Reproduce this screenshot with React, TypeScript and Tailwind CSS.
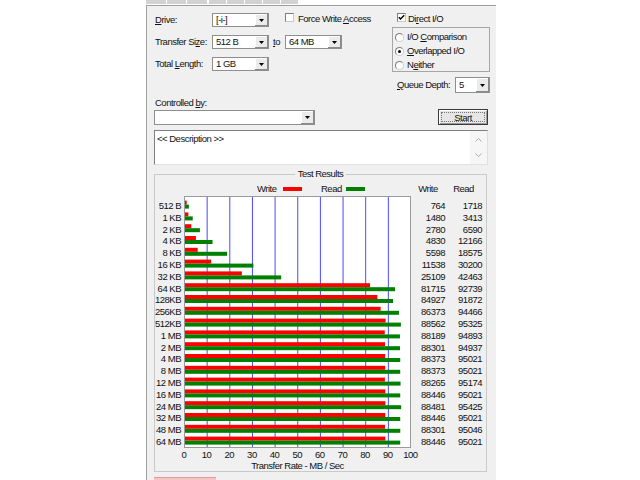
import React from "react";

const sizes = ["512 B", "1 KB", "2 KB", "4 KB", "8 KB", "16 KB", "32 KB", "64 KB", "128KB", "256KB", "512KB", "1 MB", "2 MB", "4 MB", "8 MB", "12 MB", "16 MB", "24 MB", "32 MB", "48 MB", "64 MB"];
const writes = [764, 1480, 2780, 4830, 5598, 11538, 25109, 81715, 84927, 86373, 88562, 88189, 88301, 88373, 88373, 88265, 88446, 88481, 88446, 88301, 88446];
const reads = [1718, 3413, 6590, 12166, 18575, 30200, 42463, 92739, 91872, 94466, 95325, 94893, 94937, 95021, 95021, 95174, 95021, 95425, 95021, 95046, 95021];

const ROW = 11.8;
const PX = 2.265; // px per MB/s

const Arrow = () => (
  <svg width="5" height="3" viewBox="0 0 5 3">
    <path d="M0 0h5L2.5 3z" fill="#000" />
  </svg>
);

const Combo = ({ value, className }: { value?: string; className: string }) => (
  <div className={"flex bg-white border border-[#8e8e8e] " + className}>
    <span className="flex-1 flex items-center pl-[3px] overflow-hidden">{value}</span>
    <span className="w-[13px] flex items-center justify-center bg-[#ebebeb] shadow-[inset_-1px_-1px_0_#8a8a8a,inset_1px_1px_0_#ffffff]">
      <Arrow />
    </span>
  </div>
);

const Check = ({ on }: { on?: boolean }) => (
  <span className="w-[9px] h-[9px] shrink-0 bg-white border border-[#7c7c7c] border-r-[#c8c8c8] border-b-[#c8c8c8] flex items-center justify-center">
    {on && (
      <svg width="7" height="7" viewBox="0 0 7 7">
        <path d="M0.8 3.2l1.8 1.9 3.6-3.8" fill="none" stroke="#000" strokeWidth="1.4" />
      </svg>
    )}
  </span>
);

const Radio = ({ on }: { on?: boolean }) => (
  <span className="w-[9px] h-[9px] shrink-0 rounded-full bg-white border border-[#7c7c7c] border-r-[#cfcfcf] border-b-[#cfcfcf] flex items-center justify-center">
    {on && <span className="w-[3px] h-[3px] rounded-full bg-black" />}
  </span>
);

const Chevron = ({ up }: { up?: boolean }) => (
  <svg width="7" height="4" viewBox="0 0 7 4">
    <path d={up ? "M0.5 3.5l3-3 3 3" : "M0.5 0.5l3 3 3-3"} fill="none" stroke="#a8a8a8" strokeWidth="1" />
  </svg>
);

const Chart = () => (
  <svg width="225" height="250" className="block">
    {[1, 2, 3, 4, 5, 6, 7, 8, 9].map((k) => (
      <line key={k} x1={k * 10 * PX - 0.5} x2={k * 10 * PX - 0.5} y1="0" y2="250" stroke="#4a4aff" strokeWidth="1" />
    ))}
    {sizes.map((s, i) => {
      const y = 3.6 + i * ROW;
      return (
        <g key={s}>
          <rect x="0" y={y} width={(writes[i] / 1000) * PX} height="4" fill="#ff0000" />
          <rect x="0" y={y + 4} width={(reads[i] / 1000) * PX} height="4" fill="#008000" />
        </g>
      );
    })}
  </svg>
);

export default function App() {
  return (
    <div className="w-[640px] h-[480px] bg-white overflow-hidden pl-[146px] flex flex-col whitespace-nowrap text-[9.5px] leading-[10px] tracking-[-0.5px] text-[#111] font-['Liberation_Sans',Arial,sans-serif]">
      {/* toolbar buttons cut off at the top */}
      <div className="flex h-[5px] shrink-0">
        <div className="flex h-[4px] w-[61px]">
          <div className="flex-1 bg-[#d2d2d2] border-r border-white" />
          <div className="flex-1 bg-[#d2d2d2] border-r border-white" />
          <div className="flex-1 bg-[#d2d2d2]" />
        </div>
        <div className="flex h-[4px] w-[89px] ml-[2px]">
          <div className="flex-1 bg-[#d2d2d2] border-r border-white" />
          <div className="flex-1 bg-[#d2d2d2] border-r border-white" />
          <div className="flex-1 bg-[#d2d2d2] border-r border-white" />
          <div className="flex-1 bg-[#d2d2d2] border-r border-white" />
          <div className="flex-1 bg-[#d2d2d2]" />
        </div>
      </div>

      <div className="w-[350px] flex-1 bg-[#f0f0f0] border-t border-l border-[#a0a0a0] flex flex-col">
        {/* settings */}
        <div className="flex mt-[7px]">
          <div className="w-[245px] pl-[8px] flex flex-col gap-[8px]">
            <div className="flex items-start h-[14px]">
              <span className="w-[57px] self-center">
                <u>D</u>rive:
              </span>
              <Combo value="[-i-]" className="w-[57px] h-[14px]" />
              <span className="ml-[16px] flex items-start">
                <Check />
                <span className="ml-[4px] mt-px">
                  Force Write <u>A</u>ccess
                </span>
              </span>
            </div>
            <div className="flex items-center h-[14px]">
              <span className="w-[57px]">
                Transfer Si<u>z</u>e:
              </span>
              <Combo value="512 B" className="w-[57px] h-[14px]" />
              <span className="ml-[4px] w-[12px]">
                <u>t</u>o
              </span>
              <Combo value="64 MB" className="w-[57px] h-[14px]" />
            </div>
            <div className="flex items-center h-[14px]">
              <span className="w-[57px]">
                Total <u>L</u>ength:
              </span>
              <Combo value="1 GB" className="w-[57px] h-[14px]" />
            </div>
          </div>

          <div className="w-[98px] flex flex-col">
            <div className="flex items-start h-[9px] pl-[5px]">
              <Check on />
              <span className="ml-[2px] mt-px">
                Di<u>r</u>ect I/O
              </span>
            </div>
            <div className="mt-[5px] h-[45px] border border-[#a6a6a6] pt-[4px] pl-[2px] flex flex-col gap-[4px]">
              <div className="flex items-center h-[10px]">
                <Radio />
                <span className="ml-[3px]">
                  I/O <u>C</u>omparison
                </span>
              </div>
              <div className="flex items-center h-[10px]">
                <Radio on />
                <span className="ml-[3px]">
                  <u>O</u>verlapped I/O
                </span>
              </div>
              <div className="flex items-center h-[10px]">
                <Radio />
                <span className="ml-[3px]">
                  N<u>e</u>ither
                </span>
              </div>
            </div>
            <div className="mt-[5px] h-[16px] flex items-center pl-[5px]">
              <span className="w-[58px]">
                <u>Q</u>ueue Depth:
              </span>
              <Combo value="5" className="w-[35px] h-[16px]" />
            </div>
          </div>
        </div>

        <div className="mt-[5px] h-[10px] pl-[8px]">
          Controlled <u>b</u>y:
        </div>
        <div className="mt-[2px] flex items-start pl-[7px]">
          <Combo className="w-[161px] h-[15px]" />
          <button className="ml-[123px] -mt-px w-[50px] h-[16px] p-[2px] bg-[#e6e6e6] border border-[#3a3a3a] shadow-[inset_1px_1px_0_#ffffff,inset_-1px_-1px_0_#9a9a9a] text-[9.5px] leading-[9px] tracking-[-0.5px]">
            <span className="h-full flex items-center justify-center border border-dotted border-[#777]">Start</span>
          </button>
        </div>

        <div className="mt-[5px] ml-[7px] w-[334px] h-[35px] bg-white border border-[#7f7f7f] border-r-[#e0e0e0] border-b-[#e0e0e0] flex">
          <div className="flex-1 pl-[2px] pt-[3px]">&lt;&lt; Description &gt;&gt;</div>
          <div className="w-[17px] bg-[#f6f6f6] flex flex-col items-center justify-between py-[7px]">
            <Chevron up />
            <Chevron />
          </div>
        </div>

        {/* test results */}
        <div className="mt-[9px] ml-[7px] w-[333px] h-[298px] border border-[#c9c9c9] relative flex flex-col">
          <span className="absolute -top-[6px] left-1/2 -translate-x-1/2 px-[3px] bg-[#f0f0f0]">Test Results</span>

          <div className="mt-[8px] h-[12px] flex items-center">
            <div className="w-[29px]" />
            <div className="w-[227px] flex items-center">
              <span className="ml-[73px] w-[26px]">Write</span>
              <span className="w-[19px] h-[4px] bg-[#ff0000]" />
              <span className="ml-[19px] w-[25px]">Read</span>
              <span className="w-[19px] h-[4px] bg-[#008000]" />
            </div>
            <span className="w-[34px] text-center">Write</span>
            <span className="w-[37px] text-center">Read</span>
          </div>

          <div className="mt-px flex">
            <div className="w-[26px] mr-[3px] pt-[4px] flex flex-col items-end">
              {sizes.map((s) => (
                <span key={s} className="h-[11.8px] leading-[11.8px]">
                  {s}
                </span>
              ))}
            </div>
            <div className="w-[227px] h-[252px] bg-white border border-[#9a9a9a]">
              <Chart />
            </div>
            <div className="w-[34px] pt-[4px] flex flex-col items-end">
              {writes.map((v, i) => (
                <span key={i} className="h-[11.8px] leading-[11.8px]">
                  {v}
                </span>
              ))}
            </div>
            <div className="w-[37px] pt-[4px] flex flex-col items-end">
              {reads.map((v, i) => (
                <span key={i} className="h-[11.8px] leading-[11.8px]">
                  {v}
                </span>
              ))}
            </div>
          </div>

          <div className="mt-[1px] h-[11px] flex items-center ml-[17.65px]">
            {[0, 10, 20, 30, 40, 50, 60, 70, 80, 90, 100].map((n) => (
              <span key={n} className="w-[22.65px] text-center">
                {n}
              </span>
            ))}
          </div>
          <div className="h-[11px] flex items-center">
            <span className="ml-[29px] w-[227px] text-center">Transfer Rate - MB / Sec</span>
          </div>
        </div>

        <div className="mt-[5px] ml-[7px] w-[62px] h-[4px] bg-[#f6c4c4] border-t border-[#e39a9a]" />
      </div>
    </div>
  );
}
